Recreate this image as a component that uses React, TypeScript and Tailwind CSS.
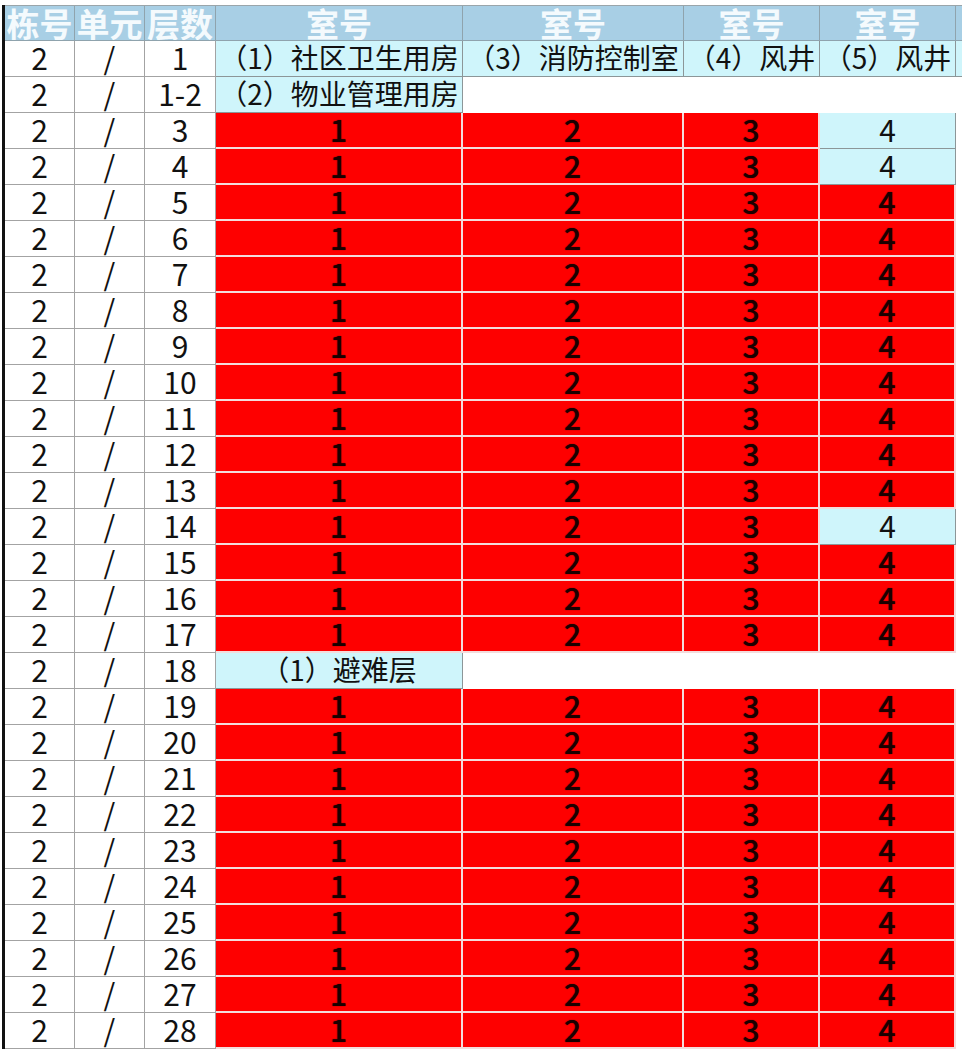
import React from 'react';

type Kind = 'head' | 'plain' | 'cyan' | 'red' | 'blank';

const cellBase = 'flex items-center justify-center overflow-hidden whitespace-nowrap';

const kindClass: Record<Kind, string> = {
  head: 'bg-[#a8cfe5] border-r border-b border-[#8fa3ad] text-[#f4fafd] font-bold text-[33px] leading-none',
  plain: 'bg-white border-r border-b border-[#a3a3a3] text-[#111] text-[30px] leading-none pb-[4px]',
  cyan: 'bg-[#cff5fb] border-r border-b border-[#8c9698] text-[#111] text-[28px] leading-none pb-[3px]',
  red: 'bg-[#fe0000] border-r-2 border-b-2 border-[#f3dcdc] text-[#1a0000] text-[30px] font-medium leading-none pb-[2px] [text-shadow:0_0_1px_#300]',
  blank: 'bg-white',
};

const Cell = ({ kind, children, className = '' }: { kind: Kind; children?: React.ReactNode; className?: string }) => (
  <div className={`${cellBase} ${kindClass[kind]} ${className}`}>{children}</div>
);

const floors: string[] = [
  '1',
  '1-2',
  ...Array.from({ length: 15 }, (_, i) => String(i + 3)),
  '18',
  ...Array.from({ length: 10 }, (_, i) => String(i + 19)),
];

// floors where the 5th room is not marked red
const lightFourth = ['3', '4', '14'];

const FloorRow = ({ floor }: { floor: string }) => {
  const lead = (
    <>
      <Cell kind="plain">2</Cell>
      <Cell kind="plain">/</Cell>
      <Cell kind="plain">{floor}</Cell>
    </>
  );

  if (floor === '1') {
    return (
      <>
        {lead}
        <Cell kind="cyan">（1）社区卫生用房</Cell>
        <Cell kind="cyan">（3）消防控制室</Cell>
        <Cell kind="cyan">（4）风井</Cell>
        <Cell kind="cyan">（5）风井</Cell>
        <Cell kind="cyan" />
      </>
    );
  }

  if (floor === '1-2') {
    return (
      <>
        {lead}
        <Cell kind="cyan">（2）物业管理用房</Cell>
        <Cell kind="blank" className="col-span-4" />
      </>
    );
  }

  if (floor === '18') {
    return (
      <>
        {lead}
        <Cell kind="cyan">（1）避难层</Cell>
        <Cell kind="blank" className="col-span-4" />
      </>
    );
  }

  return (
    <>
      {lead}
      <Cell kind="red">1</Cell>
      <Cell kind="red">2</Cell>
      <Cell kind="red">3</Cell>
      {lightFourth.includes(floor) ? (
        <Cell kind="cyan" className="text-[30px]">4</Cell>
      ) : (
        <Cell kind="red">4</Cell>
      )}
      <Cell kind="blank" />
    </>
  );
};

export default function App() {
  return (
    <div className='w-[962px] h-[1052px] overflow-hidden bg-white pt-[5px] pl-[2px] font-["Noto_Sans_CJK_SC",sans-serif]'>
      <div className="border-l-[3px] border-[#111] w-[1000px]">
        <div className="grid grid-cols-[70px_70px_71px_247px_221px_136px_136px_30px] auto-rows-[36px] grid-rows-[35px] border-t border-[#9aa5aa]">
          <Cell kind="head">栋号</Cell>
          <Cell kind="head">单元</Cell>
          <Cell kind="head">层数</Cell>
          <Cell kind="head">室号</Cell>
          <Cell kind="head">室号</Cell>
          <Cell kind="head">室号</Cell>
          <Cell kind="head">室号</Cell>
          <Cell kind="head" />
          {floors.map((f) => (
            <FloorRow key={f} floor={f} />
          ))}
        </div>
      </div>
    </div>
  );
}
